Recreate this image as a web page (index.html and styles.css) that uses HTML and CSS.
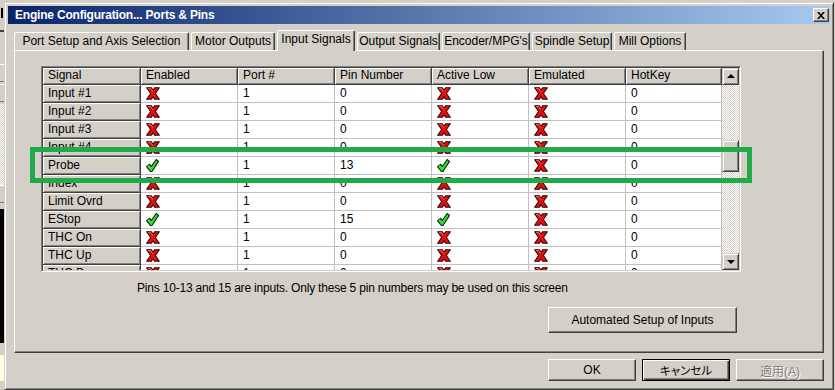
FILE: index.html
```html
<!DOCTYPE html>
<html lang="en">
<head>
<meta charset="utf-8">
<title>Engine Configuration... Ports &amp; Pins</title>
<link rel="stylesheet" href="styles.css">
</head>
<body>
<svg class="defs" width="0" height="0" aria-hidden="true">
  <symbol id="ico-x" viewBox="0 0 13 12">
    <path d="M0.6 0.6h4.2l1.7 2.3 1.7-2.3h4.2l-3.7 5.4 3.7 5.4h-4.2l-1.7-2.3-1.7 2.3h-4.2l3.7-5.4z" fill="#e01010" stroke="#3a0000" stroke-width="1" stroke-linejoin="round"/>
    <path d="M2 1.5h2.4l2.1 2.8" fill="none" stroke="#ff6a6a" stroke-width="0.9"/>
  </symbol>
  <symbol id="ico-ok" viewBox="0 0 12 12">
    <path d="M0.5 7 3.4 4.9l1.5 2L9.4 0.5l2.2 1.7-6.1 9.3H4z" fill="#33dd33" stroke="#002800" stroke-width="1" stroke-linejoin="round"/>
    <path d="M1.6 6.9 3.3 5.8" fill="none" stroke="#aaffaa" stroke-width="0.8"/>
  </symbol>
</svg>
<div class="screen">
  <div class="bg-left">
    <div class="bl bl-gap8"></div>
    <div class="bl bl-h"></div>
    <div class="bl bl-gap12"></div>
    <div class="bl bl-line"></div>
    <div class="bl bl-gap30"></div>
    <div class="bl bl-btn"></div>
    <div class="bl bl-btn"></div>
    <div class="bl bl-dither"></div>
    <div class="bl bl-btn"></div>
    <div class="bl bl-gap4"></div>
    <div class="bl bl-black"></div>
    <div class="bl bl-gap12"></div>
    <div class="bl bl-yellow"></div>
  </div>

  <div class="window">
    <div class="titlebar">
      <span class="title">Engine Configuration... Ports &amp; Pins</span>
      <span class="close-btn">
        <svg width="8" height="7" viewBox="0 0 8 7"><path d="M0 0h2l2 2.3L6 0h2L5 3.5 8 7H6L4 4.7 2 7H0l3-3.5z" fill="#000"/></svg>
      </span>
    </div>

    <div class="tabs">
      <div class="tab t1">Port Setup and Axis Selection</div>
      <div class="tab t2">Motor Outputs</div>
      <div class="tab t3 active">Input Signals</div>
      <div class="tab t4">Output Signals</div>
      <div class="tab t5">Encoder/MPG's</div>
      <div class="tab t6">Spindle Setup</div>
      <div class="tab t7">Mill Options</div>
    </div>

    <div class="panel">
      <div class="grid">
        <div class="grid-inner">
          <div class="grid-body">
            <div class="row head">
              <div class="hc">Signal</div><div class="hc">Enabled</div><div class="hc">Port #</div><div class="hc">Pin Number</div><div class="hc">Active Low</div><div class="hc">Emulated</div><div class="hc">HotKey</div>
            </div>
            <div class="row">
              <div class="sc">Input #1</div><div class="dc"><svg class="ico"><use href="#ico-x"/></svg></div><div class="dc">1</div><div class="dc">0</div><div class="dc"><svg class="ico"><use href="#ico-x"/></svg></div><div class="dc"><svg class="ico"><use href="#ico-x"/></svg></div><div class="dc">0</div>
            </div>
            <div class="row">
              <div class="sc">Input #2</div><div class="dc"><svg class="ico"><use href="#ico-x"/></svg></div><div class="dc">1</div><div class="dc">0</div><div class="dc"><svg class="ico"><use href="#ico-x"/></svg></div><div class="dc"><svg class="ico"><use href="#ico-x"/></svg></div><div class="dc">0</div>
            </div>
            <div class="row">
              <div class="sc">Input #3</div><div class="dc"><svg class="ico"><use href="#ico-x"/></svg></div><div class="dc">1</div><div class="dc">0</div><div class="dc"><svg class="ico"><use href="#ico-x"/></svg></div><div class="dc"><svg class="ico"><use href="#ico-x"/></svg></div><div class="dc">0</div>
            </div>
            <div class="row">
              <div class="sc">Input #4</div><div class="dc"><svg class="ico"><use href="#ico-x"/></svg></div><div class="dc">1</div><div class="dc">0</div><div class="dc"><svg class="ico"><use href="#ico-x"/></svg></div><div class="dc"><svg class="ico"><use href="#ico-x"/></svg></div><div class="dc">0</div>
            </div>
            <div class="row">
              <div class="sc">Probe</div><div class="dc"><svg class="ico ok"><use href="#ico-ok"/></svg></div><div class="dc">1</div><div class="dc">13</div><div class="dc"><svg class="ico ok"><use href="#ico-ok"/></svg></div><div class="dc"><svg class="ico"><use href="#ico-x"/></svg></div><div class="dc">0</div>
            </div>
            <div class="row">
              <div class="sc">Index</div><div class="dc"><svg class="ico"><use href="#ico-x"/></svg></div><div class="dc">1</div><div class="dc">0</div><div class="dc"><svg class="ico"><use href="#ico-x"/></svg></div><div class="dc"><svg class="ico"><use href="#ico-x"/></svg></div><div class="dc">0</div>
            </div>
            <div class="row">
              <div class="sc">Limit Ovrd</div><div class="dc"><svg class="ico"><use href="#ico-x"/></svg></div><div class="dc">1</div><div class="dc">0</div><div class="dc"><svg class="ico"><use href="#ico-x"/></svg></div><div class="dc"><svg class="ico"><use href="#ico-x"/></svg></div><div class="dc">0</div>
            </div>
            <div class="row">
              <div class="sc">EStop</div><div class="dc"><svg class="ico ok"><use href="#ico-ok"/></svg></div><div class="dc">1</div><div class="dc">15</div><div class="dc"><svg class="ico ok"><use href="#ico-ok"/></svg></div><div class="dc"><svg class="ico"><use href="#ico-x"/></svg></div><div class="dc">0</div>
            </div>
            <div class="row">
              <div class="sc">THC On</div><div class="dc"><svg class="ico"><use href="#ico-x"/></svg></div><div class="dc">1</div><div class="dc">0</div><div class="dc"><svg class="ico"><use href="#ico-x"/></svg></div><div class="dc"><svg class="ico"><use href="#ico-x"/></svg></div><div class="dc">0</div>
            </div>
            <div class="row">
              <div class="sc">THC Up</div><div class="dc"><svg class="ico"><use href="#ico-x"/></svg></div><div class="dc">1</div><div class="dc">0</div><div class="dc"><svg class="ico"><use href="#ico-x"/></svg></div><div class="dc"><svg class="ico"><use href="#ico-x"/></svg></div><div class="dc">0</div>
            </div>
            <div class="row">
              <div class="sc">THC Down</div><div class="dc"><svg class="ico"><use href="#ico-x"/></svg></div><div class="dc">1</div><div class="dc">0</div><div class="dc"><svg class="ico"><use href="#ico-x"/></svg></div><div class="dc"><svg class="ico"><use href="#ico-x"/></svg></div><div class="dc">0</div>
            </div>
          </div>
          <div class="vscroll">
            <div class="sbtn"><span class="arrow up"></span></div>
            <div class="track"><div class="thumb"></div></div>
            <div class="sbtn"><span class="arrow down"></span></div>
          </div>
        </div>
      </div>
      <p class="note">Pins 10-13 and 15 are inputs. Only these 5 pin numbers may be used on this screen</p>
      <div class="auto-row"><button class="btn auto">Automated Setup of Inputs</button></div>
    </div>

    <div class="dlg-buttons">
      <button class="btn dlg">OK</button>
      <button class="btn dlg default">キャンセル</button>
      <button class="btn dlg disabled">適用(A)</button>
    </div>
  </div>

  <div class="bg-right"></div>
  <div class="highlight"></div>
</div>
</body>
</html>
```

FILE: styles.css
```css
* { box-sizing: border-box; }

body {
  margin: 0;
  background: #d4d0c8;
  font-family: "Liberation Sans", "Noto Sans CJK JP", sans-serif;
  font-size: 12px;
  color: #000;
}

.defs { position: absolute; width: 0; height: 0; overflow: hidden; }

.screen {
  width: 835px;
  height: 390px;
  position: relative;
  display: flex;
  overflow: hidden;
  background: #d4d0c8;
}

/* background application strip on the left */
.bg-left { width: 4px; flex: none; display: flex; flex-direction: column; }
.bl { flex: none; }
.bl-gap8 { height: 8px; }
.bl-h { height: 10px; border-right: 2px solid #000; border-left: 1px solid transparent; width: 3px; }
.bl-gap12 { height: 12px; }
.bl-gap4 { height: 4px; }
.bl-gap30 { height: 32px; }
.bl-line { height: 2px; background: #404040; }
.bl-btn { height: 18px; background: #d4d0c8; border-top: 1px solid #fff; border-bottom: 1px solid #808080; margin-bottom: 2px; }
.bl-dither { height: 81px; background: repeating-conic-gradient(#d4d0c8 0 25%, #fff 0 50%) 0 0 / 2px 2px; }
.bl-black { height: 134px; background: #000; }
.bl-yellow { height: 26px; background: #ffffe1; }

.bg-right { width: 1px; flex: none; background: #d4d0c8; }

/* dialog window */
.window {
  width: 830px;
  height: 388px;
  margin-top: 2px;
  flex: none;
  display: flex;
  flex-direction: column;
  background: #d4d0c8;
  border: 1px solid;
  border-color: #d4d0c8 #404040 #404040 #d4d0c8;
  padding: 3px;
  box-shadow: inset 1px 1px #fff, inset -1px -1px #808080;
}

.titlebar {
  height: 18px;
  flex: none;
  display: flex;
  align-items: center;
  justify-content: space-between;
  padding-left: 7px;
  background: linear-gradient(to right, #0a246a, #a6caf0);
}

.title {
  color: #fff;
  font-weight: bold;
  font-size: 12px;
  letter-spacing: -0.2px;
}

.close-btn {
  width: 16px;
  height: 14px;
  margin-right: 1px;
  display: flex;
  align-items: center;
  justify-content: center;
  background: #d4d0c8;
  border: 1px solid;
  border-color: #fff #404040 #404040 #fff;
  box-shadow: inset -1px -1px #808080;
}

/* tabs */
.tabs {
  height: 20px;
  margin-top: 6px;
  padding-left: 6px;
  display: flex;
  align-items: flex-start;
  flex: none;
}

.tab {
  height: 18px;
  margin-top: 2px;
  margin-right: 2px;
  line-height: 16px;
  text-align: center;
  white-space: nowrap;
  background: #d4d0c8;
  border-top: 1px solid #fff;
  border-left: 1px solid #fff;
  border-right: 1px solid #404040;
  border-radius: 2px 2px 0 0;
  box-shadow: inset -1px 0 #808080;
}

.t1 { width: 175px; }
.t2 { width: 84px; }
.t3 { width: 78px; }
.t4 { width: 83px; }
.t5 { width: 88px; }
.t6 { width: 80px; }
.t7 { width: 72px; }

.tab.active {
  height: 21px;
  margin-top: 0;
  line-height: 17px;
  position: relative;
  z-index: 2;
}

/* tab page */
.panel {
  height: 303px;
  margin: 0 6px;
  flex: none;
  border-top: 1px solid #fff;
  border-left: 1px solid #fff;
  border-right: 1px solid #404040;
  border-bottom: 1px solid #404040;
  box-shadow: inset -1px -1px #808080;
  padding: 15px 0 0 26px;
}

.grid {
  width: 700px;
  height: 206px;
  border: 1px solid;
  border-color: #808080 #fff #fff #808080;
}

.grid-inner {
  height: 204px;
  border: 1px solid;
  border-color: #404040 #d4d0c8 #d4d0c8 #404040;
  display: flex;
  background: #fff;
}

.grid-body {
  width: 679px;
  height: 202px;
  overflow: hidden;
  flex: none;
}

.row {
  display: grid;
  grid-template-columns: 98px 97px 97px 97px 97px 97px 96px;
  height: 18px;
}

.row.head { height: 17px; }

.hc, .sc {
  background: #d4d0c8;
  border-right: 1px solid #404040;
  border-bottom: 1px solid #404040;
  box-shadow: inset 1px 1px #fff, inset -1px -1px #808080;
  padding-left: 5px;
  line-height: 16px;
  white-space: nowrap;
  overflow: hidden;
}

.hc { line-height: 15px; }

.dc {
  background: #fff;
  border-right: 1px solid #c0c0c0;
  border-bottom: 1px solid #c0c0c0;
  padding-left: 5px;
  line-height: 17px;
  white-space: nowrap;
  overflow: hidden;
  display: flex;
  align-items: center;
}

.ico {
  width: 14px;
  height: 13px;
  margin-left: 0;
  display: block;
  flex: none;
}
.ico.ok { width: 13px; height: 13px; }

/* scrollbar */
.vscroll {
  width: 17px;
  height: 202px;
  flex: none;
  display: flex;
  flex-direction: column;
}

.sbtn {
  width: 17px;
  height: 17px;
  flex: none;
  background: #d4d0c8;
  border: 1px solid;
  border-color: #d4d0c8 #404040 #404040 #d4d0c8;
  box-shadow: inset 1px 1px #fff, inset -1px -1px #808080;
  display: flex;
  align-items: center;
  justify-content: center;
}

.arrow { width: 0; height: 0; border-left: 4px solid transparent; border-right: 4px solid transparent; }
.arrow.up { border-bottom: 4px solid #000; margin-top: -1px; }
.arrow.down { border-top: 4px solid #000; }

.track {
  flex: 1;
  background: repeating-conic-gradient(#d4d0c8 0 25%, #fff 0 50%) 0 0 / 2px 2px;
}

.thumb {
  height: 32px;
  margin-top: 55px;
  background: #d4d0c8;
  border: 1px solid;
  border-color: #d4d0c8 #404040 #404040 #d4d0c8;
  box-shadow: inset 1px 1px #fff, inset -1px -1px #808080;
}

.note {
  margin: 9px 0 0 96px;
  line-height: 14px;
  letter-spacing: -0.2px;
  white-space: nowrap;
}

.auto-row { margin-top: 12px; padding-left: 507px; }

/* buttons */
.btn {
  font-family: "Liberation Sans", "Noto Sans CJK JP", sans-serif;
  font-size: 12px;
  color: #000;
  background: #d4d0c8;
  border: 1px solid;
  border-color: #fff #404040 #404040 #fff;
  box-shadow: inset -1px -1px #808080;
  padding: 0;
  margin: 0;
}

.btn.auto { width: 189px; height: 26px; }

.dlg-buttons {
  margin-top: 6px;
  padding-right: 6px;
  display: flex;
  justify-content: flex-end;
  gap: 6px;
  flex: none;
}

.btn.dlg { width: 88px; height: 22px; }

.btn.default {
  border-color: #000;
  box-shadow: inset 1px 1px #fff, inset -1px -1px #404040, inset -2px -2px #808080;
  font-feature-settings: "palt";
  font-size: 11.5px;
}

.btn.disabled {
  color: #808080;
  text-shadow: 1px 1px #fff;
  font-feature-settings: "palt";
}

/* annotation rectangle drawn over the screenshot */
.highlight {
  position: absolute;
  left: 30px;
  top: 147px;
  width: 722px;
  height: 36px;
  border: 5px solid #22aa4a;
  pointer-events: none;
}
```
